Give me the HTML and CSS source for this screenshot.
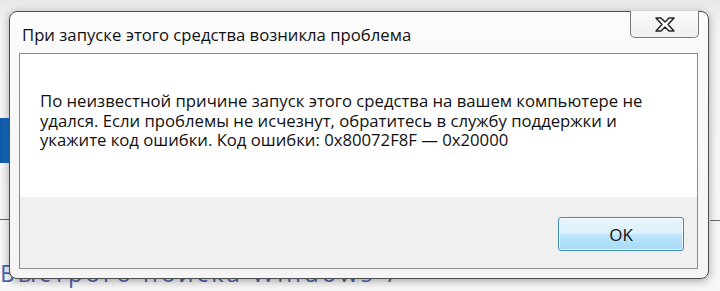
FILE: index.html
```html
<!DOCTYPE html>
<html lang="ru">
<head>
<meta charset="utf-8">
<link rel="stylesheet" href="styles.css">
</head>
<body>
<div class="desktop">
  <div class="desk-bar"></div>
  <div class="desk-line desk-line-left"></div>
  <div class="desk-line desk-line-right"></div>
  <div class="desk-text">Быстрого поиска Windows 7</div>
</div>
<div class="window">
  <div class="titlebar">
    <span class="title">При запуске этого средства возникла проблема</span>
    <button class="close" aria-label="Закрыть">
      <svg width="24" height="17" viewBox="0 0 24 17">
        <path d="M3 2 L8 2 L12 6 L16 2 L21 2 L15 8.5 L21 15 L16 15 L12 11 L8 15 L3 15 L9 8.5 Z" fill="#ffffff" stroke="#262626" stroke-width="1.5" stroke-linejoin="round"/>
      </svg>
    </button>
  </div>
  <div class="panel">
    <div class="message">
      <p>По неизвестной причине запуск этого средства на вашем компьютере не удался. Если проблемы не исчезнут, обратитесь в службу поддержки и укажите код ошибки. Код ошибки: 0x80072F8F — 0x20000</p>
    </div>
    <div class="footer">
      <button class="ok">OK</button>
    </div>
  </div>
</div>
</body>
</html>
```
FILE: styles.css
```css
html, body {
  margin: 0;
  padding: 0;
}
body {
  width: 720px;
  height: 291px;
  overflow: hidden;
  position: relative;
  background: linear-gradient(#e9e9e9, #f4f4f4 30px, #f7f7f7);
  font-family: "Open Sans", "Noto Sans", sans-serif;
  padding: 11px 0 0 9px;
  box-sizing: border-box;
}
.desktop {
  position: absolute;
  inset: 0;
  z-index: 0;
  overflow: hidden;
}
.desk-bar {
  position: absolute;
  left: 0;
  top: 118px;
  width: 12px;
  height: 45px;
  background: linear-gradient(90deg, #0f5aa8, #1a6cc0 70%, #6aa8e8);
}
.desk-line {
  position: absolute;
  height: 1px;
  background: #6a6a6a;
}
.desk-line-left { left: 0; top: 219px; width: 10px; }
.desk-line-right { left: 710px; top: 220px; width: 10px; }
.desk-text {
  position: absolute;
  left: 0;
  top: 258px;
  font-size: 24px;
  line-height: 30px;
  color: #4a68b0;
  white-space: nowrap;
  letter-spacing: 3px;
}
.window {
  position: relative;
  z-index: 1;
  width: 700px;
  height: 268px;
  box-sizing: border-box;
  border: 1px solid #4c4c4c;
  border-radius: 8px;
  background: linear-gradient(#fbfbfb, #f4f4f4);
  box-shadow: 0 2px 8px rgba(0,0,0,0.35);
  display: flex;
  flex-direction: column;
}
.titlebar {
  height: 41px;
  display: flex;
  align-items: flex-start;
  justify-content: space-between;
}
.title {
  margin: 11px 0 0 12px;
  font-size: 16.7px;
  color: #111;
}
.close {
  width: 69px;
  height: 27px;
  margin: -1px 9px 0 0;
  border: 1px solid #7a7a7a;
  border-top: none;
  border-radius: 0 0 5px 5px;
  background: linear-gradient(#fafafa, #f0f0f0);
  padding: 0;
  display: flex;
  align-items: center;
  justify-content: center;
}
.panel {
  flex: 1;
  margin: 0 10px 9px 9px;
  border: 1px solid #8c8c8c;
  display: flex;
  flex-direction: column;
}
.message {
  background: #ffffff;
  height: 143px;
  padding: 37px 20px 0 20px;
  box-sizing: border-box;
}
.message p {
  margin: 0;
  font-size: 16.7px;
  line-height: 19.5px;
  color: #111;
}
.footer {
  flex: 1;
  background: #f0f0f0;
  display: flex;
  justify-content: flex-end;
  align-items: flex-start;
  padding: 20px 13px 0 0;
}
.ok {
  width: 126px;
  height: 34px;
  border: 1px solid #3c8db9;
  border-radius: 3px;
  background: linear-gradient(#eaf6fd 0%, #d9f0fc 50%, #bee6fd 51%, #a7d9f5 100%);
  box-shadow: inset 0 0 0 1px rgba(255,255,255,0.7);
  font-family: "Open Sans", "Noto Sans", sans-serif;
  font-size: 17px;
  color: #111;
  padding: 0;
}
```
